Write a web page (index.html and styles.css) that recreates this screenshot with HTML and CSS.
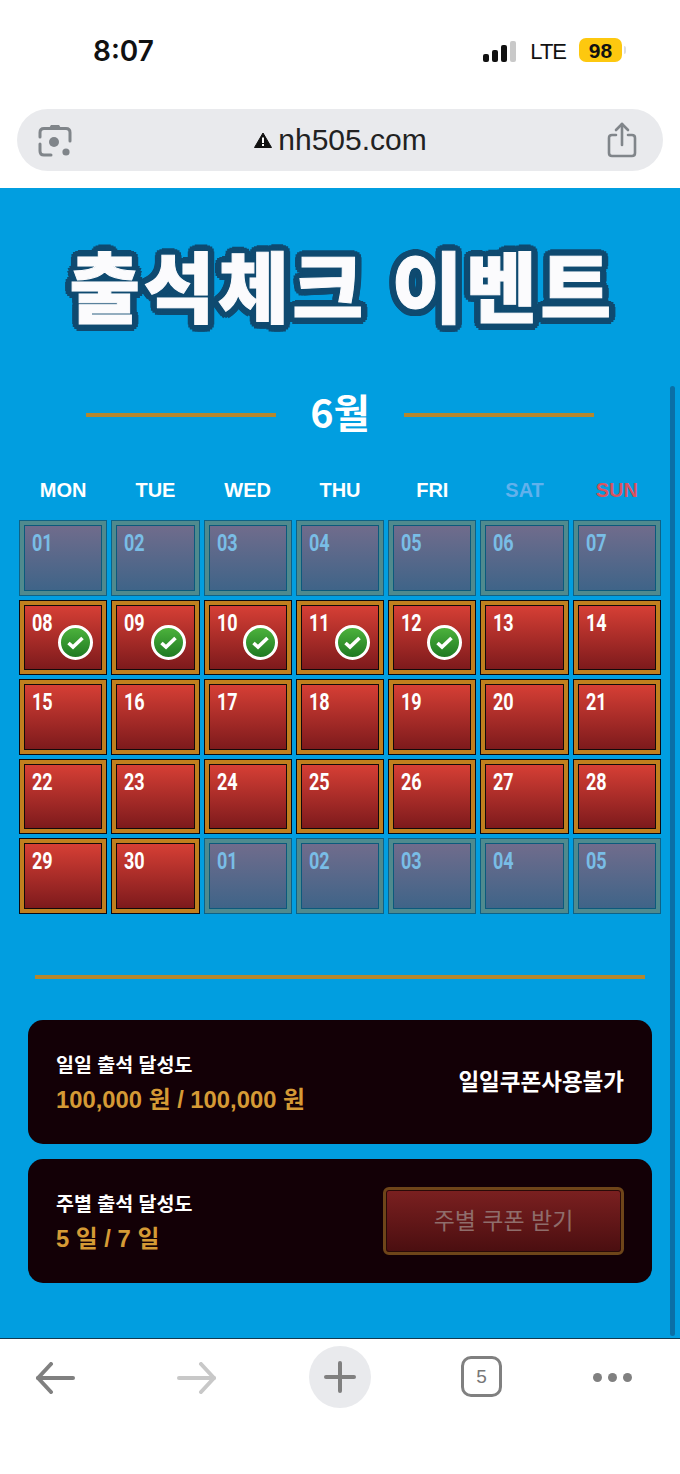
FILE: index.html
```html
<!DOCTYPE html>
<html lang="ko">
<head>
    <meta charset="UTF-8">
    <meta name="viewport" content="width=device-width, initial-scale=1.0">
    <title>출석체크 이벤트</title>
    <link rel="stylesheet" href="styles.css">
</head>
<body>
    <header class="chrome">
        <div class="status">
            <span class="time">8:07</span>
            <div class="status-right">
                <div class="signal"><i class="b1"></i><i class="b2"></i><i class="b3"></i><i class="b4"></i></div>
                <span class="lte">LTE</span>
                <span class="battery">98</span>
                <span class="nub"></span>
            </div>
        </div>
        <div class="urlbar">
            <svg class="lens" width="34" height="34" viewBox="0 0 34 34" fill="none" stroke="#80858a" stroke-width="3" stroke-linecap="round">
                <path d="M12 5.500 L13.500 3 H20.500 L22 5.500" fill="#80858a" stroke-width="2"/>
                <path d="M2 14 V9.500 Q2 5.500 6 5.500 H28 Q32 5.500 32 9.500 V18"/>
                <path d="M2 21 V28 Q2 32 6 32 H13"/>
                <circle cx="16" cy="19" r="5" fill="#80858a" stroke="none"/>
                <circle cx="28" cy="29" r="3.600" fill="#80858a" stroke="none"/>
            </svg>
            <div class="url">
                <svg width="18" height="16" viewBox="0 0 18 16"><path d="M9 1 L17.500 15.500 H0.500 Z" fill="#111" stroke="#111" stroke-linejoin="round"/><rect x="8" y="5.500" width="2" height="5.500" fill="#fff"/><rect x="8" y="12" width="2" height="2" fill="#fff"/></svg>
                <span>nh505.com</span>
            </div>
            <svg class="share" width="30" height="36" viewBox="0 0 30 36" fill="none" stroke="#80858a" stroke-width="2.600" stroke-linecap="round" stroke-linejoin="round">
                <path d="M9 13 H5 Q2 13 2 16 V31 Q2 34 5 34 H25 Q28 34 28 31 V16 Q28 13 25 13 H21"/>
                <path d="M15 23 V2"/>
                <path d="M9 8 L15 2 L21 8"/>
            </svg>
        </div>
    </header>

    <main class="page">
        <h1 class="title">출석체크 이벤트</h1>
        <div class="month">
            <span class="rule"></span>
            <span class="month-name">6월</span>
            <span class="rule"></span>
        </div>
        <div class="weekdays">
            <span>MON</span><span>TUE</span><span>WED</span><span>THU</span><span>FRI</span><span class="sat">SAT</span><span class="sun">SUN</span>
        </div>
        <div class="calendar">
            <div class="cell off"><div class="face"><span class="num">01</span></div></div>
            <div class="cell off"><div class="face"><span class="num">02</span></div></div>
            <div class="cell off"><div class="face"><span class="num">03</span></div></div>
            <div class="cell off"><div class="face"><span class="num">04</span></div></div>
            <div class="cell off"><div class="face"><span class="num">05</span></div></div>
            <div class="cell off"><div class="face"><span class="num">06</span></div></div>
            <div class="cell off"><div class="face"><span class="num">07</span></div></div>

            <div class="cell"><div class="face"><span class="num">08</span></div><span class="check"><svg width="19" height="15" viewBox="0 0 19 15"><path d="M2.500 8 L7 12 L16.500 3" fill="none" stroke="#fff" stroke-width="3.600"/></svg></span></div>
            <div class="cell"><div class="face"><span class="num">09</span></div><span class="check"><svg width="19" height="15" viewBox="0 0 19 15"><path d="M2.500 8 L7 12 L16.500 3" fill="none" stroke="#fff" stroke-width="3.600"/></svg></span></div>
            <div class="cell"><div class="face"><span class="num">10</span></div><span class="check"><svg width="19" height="15" viewBox="0 0 19 15"><path d="M2.500 8 L7 12 L16.500 3" fill="none" stroke="#fff" stroke-width="3.600"/></svg></span></div>
            <div class="cell"><div class="face"><span class="num">11</span></div><span class="check"><svg width="19" height="15" viewBox="0 0 19 15"><path d="M2.500 8 L7 12 L16.500 3" fill="none" stroke="#fff" stroke-width="3.600"/></svg></span></div>
            <div class="cell"><div class="face"><span class="num">12</span></div><span class="check"><svg width="19" height="15" viewBox="0 0 19 15"><path d="M2.500 8 L7 12 L16.500 3" fill="none" stroke="#fff" stroke-width="3.600"/></svg></span></div>
            <div class="cell"><div class="face"><span class="num">13</span></div></div>
            <div class="cell"><div class="face"><span class="num">14</span></div></div>

            <div class="cell"><div class="face"><span class="num">15</span></div></div>
            <div class="cell"><div class="face"><span class="num">16</span></div></div>
            <div class="cell"><div class="face"><span class="num">17</span></div></div>
            <div class="cell"><div class="face"><span class="num">18</span></div></div>
            <div class="cell"><div class="face"><span class="num">19</span></div></div>
            <div class="cell"><div class="face"><span class="num">20</span></div></div>
            <div class="cell"><div class="face"><span class="num">21</span></div></div>

            <div class="cell"><div class="face"><span class="num">22</span></div></div>
            <div class="cell"><div class="face"><span class="num">23</span></div></div>
            <div class="cell"><div class="face"><span class="num">24</span></div></div>
            <div class="cell"><div class="face"><span class="num">25</span></div></div>
            <div class="cell"><div class="face"><span class="num">26</span></div></div>
            <div class="cell"><div class="face"><span class="num">27</span></div></div>
            <div class="cell"><div class="face"><span class="num">28</span></div></div>

            <div class="cell"><div class="face"><span class="num">29</span></div></div>
            <div class="cell"><div class="face"><span class="num">30</span></div></div>
            <div class="cell off"><div class="face"><span class="num">01</span></div></div>
            <div class="cell off"><div class="face"><span class="num">02</span></div></div>
            <div class="cell off"><div class="face"><span class="num">03</span></div></div>
            <div class="cell off"><div class="face"><span class="num">04</span></div></div>
            <div class="cell off"><div class="face"><span class="num">05</span></div></div>
        </div>
        <div class="divider"></div>
        <section class="card">
            <div class="card-text">
                <div class="card-label">일일 출석 달성도</div>
                <div class="card-value">100,000 원 / 100,000 원</div>
            </div>
            <div class="card-note">일일쿠폰사용불가</div>
        </section>
        <section class="card">
            <div class="card-text">
                <div class="card-label">주별 출석 달성도</div>
                <div class="card-value">5 일 / 7 일</div>
            </div>
            <button class="coupon" type="button">주별 쿠폰 받기</button>
        </section>
        <div class="scrollbar"></div>
    </main>

    <footer class="toolbar">
        <svg class="nav back" width="40" height="32" viewBox="0 0 40 32" fill="none" stroke="#808080" stroke-width="4" stroke-linecap="round" stroke-linejoin="round">
            <path d="M38 16 H3"/><path d="M16 2 L3 16 L16 30"/>
        </svg>
        <svg class="nav forward" width="40" height="32" viewBox="0 0 40 32" fill="none" stroke="#c8c8c8" stroke-width="4" stroke-linecap="round" stroke-linejoin="round">
            <path d="M2 16 H37"/><path d="M24 2 L37 16 L24 30"/>
        </svg>
        <div class="plus">
            <svg width="32" height="32" viewBox="0 0 32 32" stroke="#808080" stroke-width="4" stroke-linecap="round"><path d="M16 2 V30"/><path d="M2 16 H30"/></svg>
        </div>
        <div class="tabs">5</div>
        <div class="dots"><i></i><i></i><i></i></div>
    </footer>
</body>
</html>
```

FILE: styles.css
```css
html, body {
    margin: 0;
    padding: 0;
}
body {
    width: 680px;
    height: 1474px;
    overflow: hidden;
    background-color: #fff;
    font-family: "Liberation Sans", "Noto Sans CJK KR", sans-serif;
}

/* phone + browser top */
.chrome {
    height: 188px;
    display: flex;
    flex-direction: column;
}
.status {
    height: 109px;
    display: flex;
    justify-content: space-between;
    padding: 33px 54px 0 93px;
    box-sizing: border-box;
}
.time {
    font-family: Inter, sans-serif;
    font-size: 28px;
    font-weight: 600;
    line-height: 36px;
    color: #111;
}
.status-right {
    display: flex;
    align-items: flex-start;
    height: 36px;
}
.signal {
    display: flex;
    align-items: flex-end;
    gap: 3px;
    height: 22px;
    margin-top: 7px;
}
.signal i {
    display: block;
    width: 6px;
    border-radius: 2px;
    background-color: #111;
}
.signal .b1 { height: 8px; }
.signal .b2 { height: 12px; }
.signal .b3 { height: 17px; }
.signal .b4 { height: 21px; background-color: #c9c9c9; }
.lte {
    margin-left: 14px;
    font-size: 22px;
    letter-spacing: -1px;
    line-height: 38px;
    color: #111;
}
.battery {
    margin-left: 13px;
    margin-top: 5px;
    width: 43px;
    height: 24px;
    border-radius: 7px;
    background-color: #fdc80f;
    color: #111;
    font-size: 21px;
    font-weight: bold;
    line-height: 25px;
    text-align: center;
}
.nub {
    width: 2px;
    height: 8px;
    margin: 13px 0 0 2px;
    border-radius: 0 2px 2px 0;
    background-color: #ddd;
}
.urlbar {
    height: 62px;
    margin: 0 17px;
    padding: 0 26px 0 21px;
    border-radius: 31px;
    background-color: #e9eaed;
    display: flex;
    align-items: center;
    justify-content: space-between;
}
.url {
    display: flex;
    align-items: center;
    gap: 6px;
    margin-left: 2px;
    font-size: 30px;
    line-height: 34px;
    color: #222;
}
.lens {
    margin-top: -1px;
}
.share {
    margin-top: -1px;
}

/* event page */
.page {
    position: relative;
    height: 1150px;
    background-color: #019ee0;
    overflow: hidden;
}
.title {
    margin: 0;
    padding: 47px 0 0 4px;
    height: 133px;
    box-sizing: border-box;
    text-align: center;
    font-family: "Noto Sans CJK KR", sans-serif;
    font-size: 77px;
    font-weight: 900;
    line-height: 98px;
    letter-spacing: 3.500px;
    color: #fbfbfd;
    -webkit-text-stroke: 1px #fbfbfd;
    text-shadow:
        7px 0 #0f4a70, 6.500px 2.700px #0f4a70, 5px 5px #0f4a70, 2.700px 6.500px #0f4a70,
        0 7px #0f4a70, -2.700px 6.500px #0f4a70, -5px 5px #0f4a70, -6.500px 2.700px #0f4a70,
        -7px 0 #0f4a70, -6.500px -2.700px #0f4a70, -5px -5px #0f4a70, -2.700px -6.500px #0f4a70,
        0 -7px #0f4a70, 2.700px -6.500px #0f4a70, 5px -5px #0f4a70, 6.500px -2.700px #0f4a70,
        4px 0 #0f4a70, 3px 3px #0f4a70, 0 4px #0f4a70, -3px 3px #0f4a70,
        -4px 0 #0f4a70, -3px -3px #0f4a70, 0 -4px #0f4a70, 3px -3px #0f4a70;
}
.month {
    display: flex;
    align-items: center;
    justify-content: center;
    gap: 34px;
    margin-top: 64px;
    height: 56px;
}
.rule {
    width: 190px;
    height: 4px;
    margin-top: 3px;
    background-color: #b5872d;
}
.month-name {
    width: 60px;
    margin-top: -5px;
    text-align: center;
    white-space: nowrap;
    font-family: "Noto Sans CJK KR", sans-serif;
    font-size: 39.500px;
    font-weight: 700;
    line-height: 56px;
    color: #fff;
}
.weekdays {
    display: grid;
    grid-template-columns: repeat(7, 1fr);
    gap: 4px;
    margin: 34px 19px 0;
    text-align: center;
    color: #fff;
    font-size: 20px;
    font-weight: bold;
    line-height: 30px;
}
.weekdays .sat { color: #61b1ec; }
.weekdays .sun { color: #d9535f; }
.calendar {
    display: grid;
    grid-template-columns: repeat(7, 1fr);
    grid-auto-rows: 75.500px;
    gap: 4px;
    margin: 15px 19px 0;
}
.cell {
    position: relative;
    padding: 4px;
    border: 1.500px solid #0a0a12;
    background-color: #c07f1e;
}
.face {
    box-sizing: border-box;
    height: 100%;
    padding: 1px 0 0 7px;
    border: 1.500px solid #120a0a;
    background: linear-gradient(#d63f35, #7d1a1c);
    color: #fff;
    font-family: Roboto, "Liberation Sans", sans-serif;
    font-size: 24px;
    font-weight: bold;
    line-height: 32px;
}
.num {
    display: inline-block;
    transform: scaleX(.75);
    transform-origin: 0 50%;
}
.cell.off {
    border-color: #0e6286;
    background-color: #4f8a8e;
}
.off .face {
    border-color: #0b5a7c;
    background: linear-gradient(#706c8c, #3f6488);
    color: #79bde6;
}
.check {
    position: absolute;
    right: 13px;
    bottom: 14.500px;
    width: 35px;
    height: 35px;
    box-sizing: border-box;
    border: 3px solid #fff;
    border-radius: 50%;
    background: linear-gradient(#4cb23c, #1f7a22);
    display: flex;
    align-items: center;
    justify-content: center;
}
.divider {
    height: 3.500px;
    margin: 61.500px 35px 0;
    background-color: #b5872d;
}
.card {
    display: flex;
    align-items: center;
    justify-content: space-between;
    height: 124px;
    margin: 15px 28px 0;
    padding: 0 28px;
    box-sizing: border-box;
    border-radius: 15px;
    background-color: #130006;
}
.divider + .card {
    margin-top: 41.500px;
}
.card-text {
    padding-top: 3px;
}
.card-label {
    color: #fff;
    font-size: 19.500px;
    font-weight: bold;
    line-height: 30px;
}
.card-value {
    margin-top: 3px;
    color: #d59a35;
    font-size: 23.800px;
    font-weight: bold;
    line-height: 34px;
}
.card-note {
    margin-top: -4px;
    color: #fff;
    font-size: 22.500px;
    font-weight: bold;
}
.coupon {
    width: 241px;
    height: 68px;
    padding: 0 0 5px;
    box-sizing: border-box;
    border: 3px solid #6e4519;
    border-radius: 6px;
    outline: 1px solid #2a0a08;
    outline-offset: -4px;
    background: linear-gradient(#7b2020, #4a0e10);
    color: #8f6d6b;
    font-family: inherit;
    font-size: 23px;
}
.scrollbar {
    position: absolute;
    top: 198px;
    right: 5px;
    width: 5px;
    height: 950px;
    border-radius: 3px;
    background-color: #0a6fa6;
}

/* browser bottom */
.toolbar {
    height: 136px;
    box-sizing: border-box;
    border-top: 1px solid #123a50;
    display: flex;
    align-items: flex-start;
    padding: 7px 0 0 35px;
}
.nav {
    margin-top: 16px;
}
.forward {
    margin-left: 102px;
}
.plus {
    width: 62px;
    height: 62px;
    margin-left: 92px;
    border-radius: 50%;
    background-color: #e9eaed;
    display: flex;
    align-items: center;
    justify-content: center;
}
.tabs {
    width: 41px;
    height: 41px;
    box-sizing: border-box;
    margin: 10px 0 0 90px;
    border: 3.500px solid #808080;
    border-radius: 10px;
    color: #777;
    font-size: 19px;
    line-height: 36px;
    text-align: center;
}
.dots {
    display: flex;
    gap: 6px;
    margin: 27px 0 0 91px;
}
.dots i {
    display: block;
    width: 9px;
    height: 9px;
    border-radius: 50%;
    background-color: #808080;
}
```
